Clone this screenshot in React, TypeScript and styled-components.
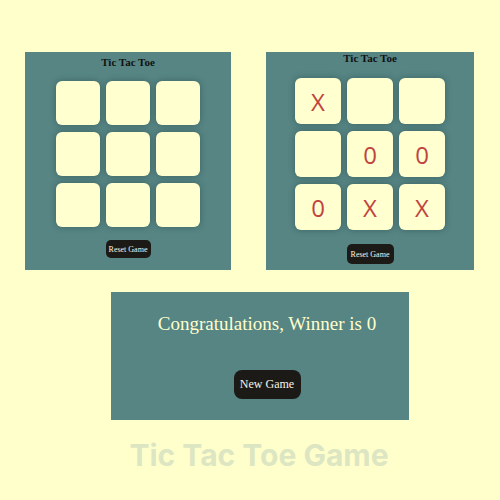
import * as React from 'react';
import styled, { createGlobalStyle } from 'styled-components';

const GlobalStyle = createGlobalStyle`
    html, body {
        margin: 0;
        padding: 0;
        background-color: #ffffcc;
    }
`;

const Page = styled.div`
    width: 500px;
    height: 500px;
    box-sizing: border-box;
    padding-top: 52px;
    background-color: #ffffcc;
    display: flex;
    flex-direction: column;
`;

const TopRow = styled.div`
    display: flex;
    gap: 35px;
    padding-left: 25px;
`;

const Panel = styled.div<{ $w: number; $pad: number }>`
    width: ${(p) => p.$w}px;
    height: 218px;
    box-sizing: border-box;
    padding-top: ${(p) => p.$pad}px;
    background-color: #568584;
    display: flex;
    flex-direction: column;
    align-items: center;
`;

const Title = styled.div`
    font-family: 'Liberation Serif', serif;
    font-weight: bold;
    font-size: 11px;
    line-height: 13px;
    color: #111;
`;

const Grid = styled.div<{ $cell: number; $top: number }>`
    margin-top: ${(p) => p.$top}px;
    display: grid;
    grid-template-columns: repeat(3, ${(p) => p.$cell}px);
    grid-auto-rows: ${(p) => p.$cell}px;
    column-gap: 6px;
    row-gap: 7px;
`;

const Cell = styled.div`
    background-color: #ffffcf;
    border-radius: 6px;
    box-shadow: 0 0 6px rgba(30, 60, 60, 0.45);
    display: flex;
    align-items: center;
    justify-content: center;
    font-family: 'Open Sans', sans-serif;
    font-size: 24px;
    color: #bf4440;
`;

const SmallButton = styled.button<{ $w: number; $h: number; $top: number }>`
    margin-top: ${(p) => p.$top}px;
    width: ${(p) => p.$w}px;
    height: ${(p) => p.$h}px;
    padding: 0;
    border: none;
    border-radius: 5px;
    background-color: #1b1a16;
    color: #f4f4ea;
    font-family: 'Liberation Serif', serif;
    font-size: 8px;
`;

const BottomRow = styled.div`
    margin-top: 22px;
    padding-left: 111px;
`;

const WinPanel = styled.div`
    width: 298px;
    height: 128px;
    box-sizing: border-box;
    padding: 20px 0 0 14px;
    background-color: #568584;
    display: flex;
    flex-direction: column;
    align-items: center;
`;

const WinText = styled.div`
    font-family: 'Liberation Serif', serif;
    font-size: 19px;
    line-height: 24px;
    color: #ffffcc;
`;

const NewButton = styled.button`
    margin-top: 34px;
    width: 67px;
    height: 29px;
    padding: 0;
    border: none;
    border-radius: 8px;
    background-color: #1b1a16;
    color: #f4f4ea;
    font-family: 'Liberation Serif', serif;
    font-size: 12px;
`;

const Heading = styled.h1`
    margin: 18px 0 0 0;
    text-align: center;
    font-family: Inter, 'Open Sans', sans-serif;
    font-weight: 700;
    font-size: 30px;
    line-height: 34px;
    color: #dde6c2;
    padding-left: 18px;
`;

interface IBoard {
    cells: string[];
    width: number;
    pad: number;
    cell: number;
    gridTop: number;
    btnW: number;
    btnH: number;
    btnTop: number;
}

const Board = ({ cells, width, pad, cell, gridTop, btnW, btnH, btnTop }: IBoard) => (
    <Panel $w={width} $pad={pad}>
        <Title>Tic Tac Toe</Title>
        <Grid $cell={cell} $top={gridTop}>
            {cells.map((c, i) => (
                <Cell key={i}>{c}</Cell>
            ))}
        </Grid>
        <SmallButton $w={btnW} $h={btnH} $top={btnTop}>
            Reset Game
        </SmallButton>
    </Panel>
);

const App = () => (
    <Page>
        <GlobalStyle />
        <TopRow>
            <Board
                cells={['', '', '', '', '', '', '', '', '']}
                width={206}
                pad={4}
                cell={44}
                gridTop={12}
                btnW={45}
                btnH={18}
                btnTop={13}
            />
            <Board
                cells={['X', '', '', '', '0', '0', '0', 'X', 'X']}
                width={208}
                pad={0}
                cell={46}
                gridTop={13}
                btnW={47}
                btnH={20}
                btnTop={14}
            />
        </TopRow>
        <BottomRow>
            <WinPanel>
                <WinText>Congratulations, Winner is 0</WinText>
                <NewButton>New Game</NewButton>
            </WinPanel>
        </BottomRow>
        <Heading>Tic Tac Toe Game</Heading>
    </Page>
);

export default App;
